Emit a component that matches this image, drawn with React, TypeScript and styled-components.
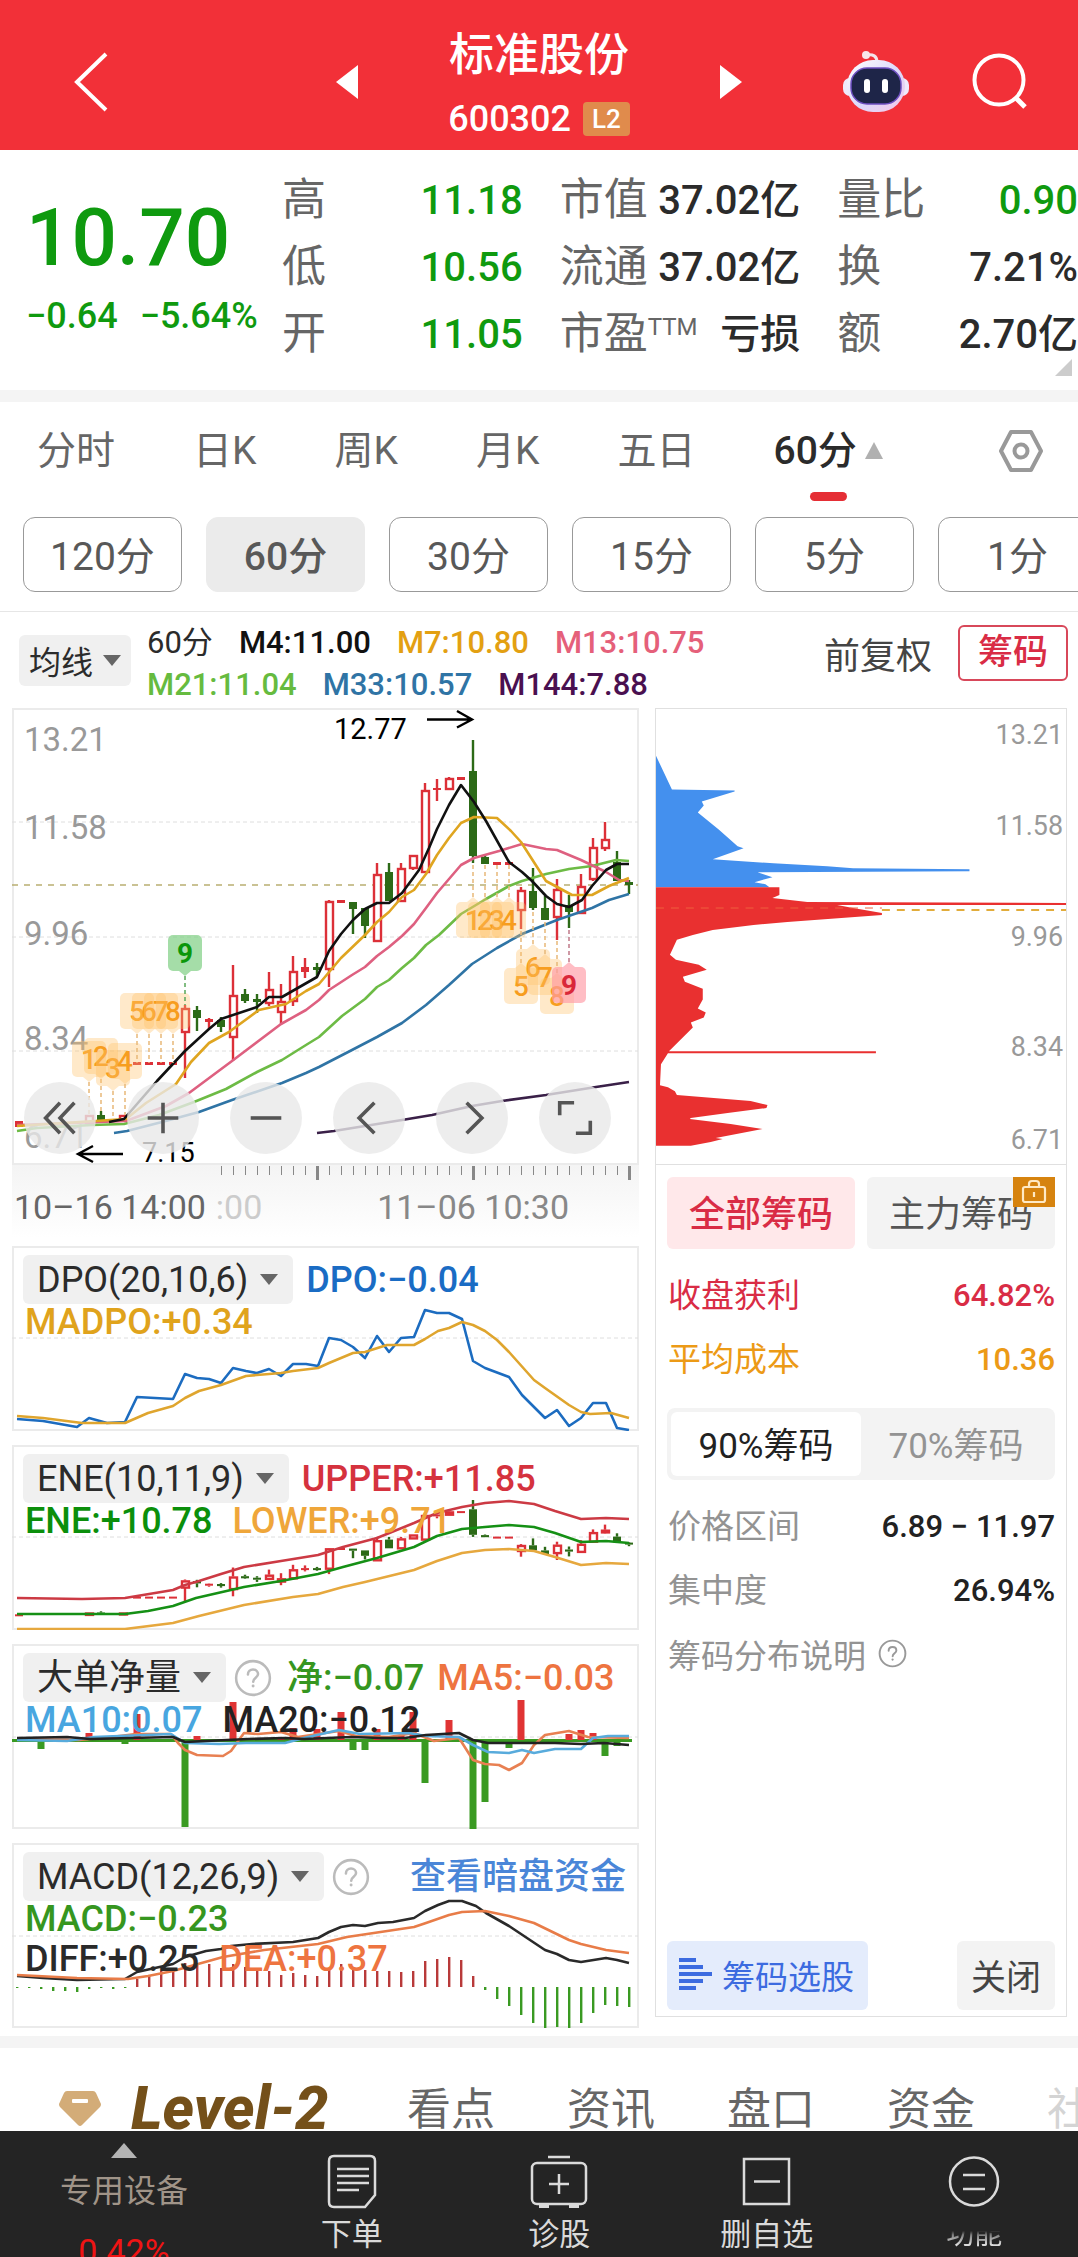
import React from "react";
import styled, { createGlobalStyle, css } from "styled-components";

const GlobalStyle = createGlobalStyle`
  * { box-sizing: border-box; }
  html, body { margin: 0; padding: 0; background: #fff; }
  body {
    font-family: Roboto, "Noto Sans CJK SC", sans-serif;
    color: #2b2b2b;
    overflow-x: hidden;
  }
  button {
    font: inherit;
    color: inherit;
    background: none;
    border: 0;
    padding: 0;
    margin: 0;
    cursor: pointer;
    white-space: nowrap;
  }
  a { text-decoration: none; }
  svg { display: block; flex: none; }
  h1, p, dl, dt, dd { margin: 0; font-weight: inherit; }
`;

const RED = "#dc3038";
const GREEN = "#0f9a0f";
const DARK_GREEN = "#2c6a17";

/* ---------- layout ---------- */

const Page = styled.div`
  width: 100%;
  overflow: hidden;
  background: #fff;
`;

const Header = styled.header`
  display: grid;
  grid-template-columns: 1fr auto 1fr;
  align-items: center;
  height: 150px;
  padding: 14px 50px 0;
  background: #f23038;
  color: #fff;
`;

const BackButton = styled.button`
  justify-self: start;
  padding-left: 22px;
`;

const HeaderCenter = styled.div`
  display: flex;
  align-items: center;
  gap: 90px;
`;

const HeaderActions = styled.div`
  display: flex;
  justify-content: flex-end;
  align-items: center;
  gap: 60px;
`;

const TitleBlock = styled.div`
  display: flex;
  flex-direction: column;
  align-items: center;
  gap: 3px;
  padding-top: 10px;
`;

const Title = styled.h1`
  font-size: 45px;
  line-height: 60px;
  font-weight: 500;
`;

const CodeLine = styled.div`
  display: flex;
  align-items: center;
  gap: 12px;
  font-size: 36px;
  line-height: 60px;
  font-weight: 500;
`;

const LevelBadge = styled.span`
  padding: 0 9px;
  border-radius: 4px;
  background: #e08b4c;
  font-size: 26px;
  line-height: 34px;
`;

const Quote = styled.section`
  display: grid;
  grid-template-columns: 245px 1fr 1fr 1fr;
  column-gap: 37px;
  height: 240px;
  padding-top: 17px;
  position: relative;
`;

const PriceBlock = styled.div`
  padding: 25px 0 0 26px;
  color: ${GREEN};
  white-space: nowrap;
`;

const Price = styled.div`
  font-size: 80px;
  line-height: 92px;
  font-weight: 500;
`;

const Change = styled.div`
  display: flex;
  gap: 22px;
  font-size: 36px;
  line-height: 64px;
  font-weight: 500;
`;

const QuoteColumn = styled.dl`
  min-width: 0;
`;

const QuoteRow = styled.div<{ $down?: boolean }>`
  display: flex;
  justify-content: space-between;
  font-size: 40px;
  line-height: 67px;
  white-space: nowrap;
  dt { font-size: 44px; color: #666; }
  dd { font-weight: 500; color: ${(p) => (p.$down ? GREEN : "#2b2b2b")}; }
  sup { font-size: 24px; line-height: 1; vertical-align: 14px; }
`;

const CornerMark = styled.span`
  position: absolute;
  right: 6px;
  bottom: 14px;
  border-left: 17px solid transparent;
  border-bottom: 17px solid #ccc;
`;

const Band = styled.div`
  height: 12px;
  background: #f4f4f4;
`;

const Tabs = styled.nav`
  display: flex;
  align-items: center;
  gap: 78px;
  height: 115px;
  padding: 0 34px 18px 37px;
`;

const Tab = styled.button<{ $active?: boolean }>`
  position: relative;
  display: flex;
  align-items: center;
  gap: 8px;
  font-size: 39px;
  line-height: 60px;
  color: ${(p) => (p.$active ? "#2b2b2b" : "#666")};
  font-weight: ${(p) => (p.$active ? 500 : 400)};
  ${(p) =>
    p.$active &&
    css`
      &::after {
        content: "";
        position: absolute;
        left: 37px;
        bottom: -20px;
        width: 37px;
        height: 9px;
        border-radius: 5px;
        background: #e52e35;
      }
    `}
`;

const SettingsButton = styled.button`
  margin-left: auto;
`;

const Chips = styled.div`
  display: flex;
  gap: 24px;
  padding: 0 0 19px 23px;
  overflow: hidden;
  border-bottom: 1px solid #e6e6e6;
`;

const Chip = styled.button<{ $active?: boolean }>`
  flex: 0 0 159px;
  height: 75px;
  padding-bottom: 3px;
  border: 1px solid ${(p) => (p.$active ? "#ebebeb" : "#999")};
  border-radius: 12px;
  background: ${(p) => (p.$active ? "#ebebeb" : "#fff")};
  color: #585858;
  font-size: 39px;
  font-weight: ${(p) => (p.$active ? 500 : 400)};
`;

const AverageBar = styled.div`
  display: flex;
  align-items: center;
  height: 96px;
  padding: 0 10px 0 19px;
`;

const Picker = styled.button<{ $big?: boolean }>`
  display: flex;
  align-items: center;
  gap: ${(p) => (p.$big ? 12 : 10)}px;
  height: ${(p) => (p.$big ? 49 : 51)}px;
  padding: ${(p) => (p.$big ? "0 15px 0 14px" : "0 10px")};
  border-radius: 6px;
  background: #f0f0f0;
  color: #2b2b2b;
  font-size: ${(p) => (p.$big ? 36 : 32)}px;
`;

const Caret = styled.span<{ $up?: boolean }>`
  border: 9px solid transparent;
  ${(p) =>
    p.$up
      ? css`border-top: 0; border-bottom: 17px solid #b0b0b0;`
      : css`border-bottom: 0; border-top: 11px solid #666;`}
`;

const Averages = styled.div`
  display: flex;
  flex-direction: column;
  flex: 1;
  padding: 8px 0 0 16px;
  white-space: nowrap;
`;

const AverageLine = styled.div`
  display: flex;
  gap: 26px;
  font-size: 31px;
  line-height: 42px;
`;

const Ink = styled.span<{ $color: string }>`
  color: ${(p) => p.$color};
  font-weight: 500;
`;

const AverageActions = styled.div`
  display: flex;
  align-items: center;
  gap: 26px;
  padding-bottom: 14px;
`;

const AdjustButton = styled.button`
  font-size: 36px;
  color: #444;
`;

const ChipsToggle = styled.button`
  width: 110px;
  height: 56px;
  border: 2px solid #d8485a;
  border-radius: 6px;
  color: #d92c45;
  font-size: 35px;
  line-height: 50px;
  font-weight: 500;
`;

const Board = styled.main`
  display: grid;
  grid-template-columns: 627fr 412fr;
  column-gap: 16px;
  padding: 0 11px 8px 12px;
`;

const Charts = styled.div`
  display: flex;
  flex-direction: column;
  min-width: 0;
`;

const Panel = styled.section`
  display: grid;
  position: relative;
  box-shadow: inset 0 0 0 2px #ebebeb;
  & + & { margin-top: 14px; }
  & > * { grid-area: 1 / 1; min-width: 0; }
`;

const Plot = styled.svg`
  width: 100%;
  height: auto;
  font-family: Roboto, sans-serif;
`;

const ChartTools = styled.div`
  position: absolute;
  left: 12px;
  bottom: 11px;
  display: flex;
  gap: 31px;
`;

const ToolButton = styled.button`
  display: grid;
  place-items: center;
  width: 72px;
  height: 72px;
  border-radius: 50%;
  background: rgba(232, 232, 232, 0.8);
`;

const TimeAxis = styled.div`
  height: 81px;
  background: linear-gradient(#f4f4f4, #fff 90%);
`;

const TimeLabels = styled.div`
  display: flex;
  padding: 2px 70px 0 2px;
  font-size: 34px;
  line-height: 40px;
  color: #888;
  white-space: nowrap;
  span:nth-child(1) { color: #666; margin-right: 10px; }
  span:nth-child(2) { color: #ccc; }
  span:nth-child(3) { margin-left: auto; }
`;

const Legend = styled.div`
  z-index: 1;
  padding: 11px 13px 0 11px;
  font-size: 36px;
  line-height: 40px;
  white-space: nowrap;
`;

const LegendTop = styled.div`
  display: flex;
  align-items: center;
  gap: 13px;
  height: 45px;
`;

const LegendRow = styled.div`
  display: flex;
  gap: 20px;
  padding-left: 2px;
`;

const FundLink = styled.a`
  margin-left: auto;
  color: #4a86d8;
  font-weight: 500;
`;

const HelpButton = styled.button`
  display: flex;
  margin: 0 2px 0 -5px;
`;

/* ---------- distribution side ---------- */

const Distribution = styled.aside`
  display: flex;
  flex-direction: column;
  margin-bottom: 11px;
  border: 1px solid #e0e0e0;
`;

const DistributionBody = styled.div`
  display: flex;
  flex-direction: column;
  flex: 1;
  padding: 12px 11px 6px;
  border-top: 1px solid #e0e0e0;
`;

const HolderTabs = styled.div`
  display: grid;
  grid-template-columns: 1fr 1fr;
  gap: 12px;
  margin-bottom: 15px;
`;

const HolderTab = styled.button<{ $active?: boolean }>`
  position: relative;
  height: 72px;
  padding-bottom: 3px;
  border-radius: 6px;
  font-size: 36px;
  background: ${(p) => (p.$active ? "#ffe8ea" : "#f3f3f3")};
  color: ${(p) => (p.$active ? "#d92c45" : "#555")};
  font-weight: ${(p) => (p.$active ? 500 : 400)};
`;

const LockBadge = styled.span`
  position: absolute;
  top: 0;
  right: 0;
  display: grid;
  place-items: center;
  width: 42px;
  height: 30px;
  background: #d6830f;
`;

const Fact = styled.div<{ $color?: string }>`
  display: flex;
  align-items: center;
  justify-content: space-between;
  height: 64px;
  padding: 0 0 0 1px;
  font-size: 33px;
  line-height: 64px;
  color: ${(p) => p.$color || "#939393"};
  dd { font-size: 31px; font-weight: 500; color: ${(p) => p.$color || "#222"}; }
`;

const Segments = styled.div`
  display: grid;
  grid-template-columns: 1fr 1fr;
  height: 72px;
  margin: 16px 0 15px;
  padding: 4px;
  border-radius: 8px;
  background: #f3f3f3;
`;

const Segment = styled.button<{ $active?: boolean }>`
  padding-bottom: 3px;
  border-radius: 6px;
  background: ${(p) => (p.$active ? "#fff" : "transparent")};
  color: ${(p) => (p.$active ? "#222" : "#939393")};
  font-size: 35px;
`;

const Explain = styled.button`
  display: flex;
  align-items: center;
  gap: 12px;
  height: 64px;
  padding: 0 0 2px 1px;
  font-size: 33px;
  color: #939393;
`;

const DistributionFooter = styled.div`
  display: flex;
  justify-content: space-between;
  margin-top: auto;
`;

const FooterButton = styled.button<{ $primary?: boolean }>`
  display: flex;
  align-items: center;
  gap: 10px;
  height: 69px;
  padding: 0 14px 2px ${(p) => (p.$primary ? 12 : 14)}px;
  border-radius: 6px;
  font-size: ${(p) => (p.$primary ? 33 : 35)}px;
  background: ${(p) => (p.$primary ? "#e4ecfc" : "#f3f3f3")};
  color: ${(p) => (p.$primary ? "#3c6be0" : "#444")};
`;

/* ---------- bottom ---------- */

const InfoTabs = styled.nav`
  display: flex;
  height: 83px;
  padding: 29px 0 0 59px;
  overflow: hidden;
`;

const InfoTab = styled.a<{ $faded?: boolean }>`
  flex: 0 0 160px;
  font-size: 44px;
  line-height: 66px;
  color: ${(p) => (p.$faded ? "#d4d4d4" : "#666")};
  white-space: nowrap;
`;

const LevelTab = styled.a`
  display: flex;
  gap: 30px;
  flex: 0 0 348px;
  font-size: 60px;
  line-height: 64px;
  font-weight: 800;
  font-style: italic;
  color: #74501a;
  svg { margin-top: 14px; }
`;

const BottomBar = styled.footer`
  display: flex;
  height: 126px;
  background: #242424;
  color: #dadada;
  overflow: hidden;
`;

const Device = styled.button`
  flex: 0 0 23%;
  display: flex;
  flex-direction: column;
  align-items: center;
  padding-top: 12px;
  font-size: 32px;
  line-height: 66px;
  color: #a09488;
`;

const DeviceGain = styled.span`
  font-size: 34px;
  line-height: 54px;
  color: #f01414;
`;

const UpMark = styled.span`
  border: 13px solid transparent;
  border-top: 0;
  border-bottom: 15px solid #b4b4b4;
`;

const BarItem = styled.button<{ $veiled?: boolean }>`
  flex: 1;
  display: flex;
  flex-direction: column;
  align-items: center;
  padding-top: 22px;
  font-size: 31px;
  line-height: 52px;
  span {
    ${(p) =>
      p.$veiled &&
      css`
        font-size: 28px;
        mask-image: linear-gradient(transparent 42%, rgba(0, 0, 0, 0.5) 50%, #000 68%);
      `}
  }
`;

/* ---------- chart data ---------- */

type Kind = "up" | "down" | "fill";
type Candle = [number, number, number, number, number, Kind];

const candles: Candle[] = [
  [20, 421, 421, 427, 427, "fill"],
  [90, 415, 415, 423, 423, "up"],
  [102, 411, 415, 422, 422, "down"],
  [124, 415, 415, 420, 420, "up"],
  [138, 362, 362, 365, 365, "fill"],
  [150, 362, 362, 365, 365, "fill"],
  [162, 362, 362, 365, 365, "fill"],
  [174, 362, 362, 365, 365, "fill"],
  [186, 305, 308, 332, 378, "up"],
  [198, 306, 310, 318, 331, "down"],
  [210, 318, 319, 322, 329, "fill"],
  [222, 317, 320, 327, 332, "down"],
  [234, 265, 295, 337, 361, "up"],
  [246, 289, 294, 301, 303, "down"],
  [258, 294, 299, 302, 313, "down"],
  [270, 272, 289, 303, 306, "up"],
  [282, 284, 301, 312, 324, "up"],
  [294, 256, 271, 301, 306, "up"],
  [306, 258, 267, 272, 278, "fill"],
  [318, 263, 267, 270, 276, "down"],
  [330, 200, 201, 269, 287, "up"],
  [342, 200, 200, 203, 203, "fill"],
  [354, 202, 202, 209, 234, "down"],
  [366, 208, 208, 226, 238, "down"],
  [378, 163, 174, 241, 241, "up"],
  [390, 163, 172, 201, 201, "down"],
  [402, 163, 168, 201, 201, "up"],
  [414, 155, 155, 168, 170, "up"],
  [426, 83, 90, 172, 172, "up"],
  [438, 79, 88, 90, 101, "fill"],
  [450, 77, 78, 89, 90, "up"],
  [462, 77, 77, 80, 80, "fill"],
  [474, 40, 71, 156, 163, "down"],
  [486, 155, 157, 164, 164, "down"],
  [498, 162, 162, 165, 165, "fill"],
  [510, 162, 162, 165, 165, "fill"],
  [522, 187, 190, 210, 229, "up"],
  [534, 168, 191, 208, 210, "down"],
  [546, 196, 208, 220, 220, "down"],
  [558, 179, 189, 217, 240, "up"],
  [570, 195, 205, 212, 228, "down"],
  [582, 174, 186, 213, 213, "up"],
  [594, 138, 147, 179, 181, "up"],
  [606, 122, 139, 148, 151, "up"],
  [618, 151, 162, 181, 181, "down"],
  [630, 180, 182, 185, 194, "down"],
];

const averageLines = [
  { color: "#3a2048", points: "318,433 335,431 403,420 433,415 473,406 503,401 547,395 597,387 630,382" },
  { color: "#2f74a5", points: "115,433 128,431 163,422 200,412 233,400 283,383 307,373 320,367 353,350 378,337 403,323 427,305 450,285 473,264 498,248 523,234 558,220 593,208 610,200 630,194" },
  { color: "#6dbb45", points: "18,431 38,428 93,425 125,424 160,415 195,402 227,389 258,372 283,360 307,345 320,337 343,316 366,299 378,287 390,280 403,268 415,258 427,245 440,235 462,214 487,199 510,186 523,181 547,174 570,169 593,166 617,160 630,161" },
  { color: "#de6080", points: "18,425 127,421 167,406 190,393 233,361 282,324 307,310 320,300 330,290 353,275 366,267 378,256 390,247 403,236 415,224 427,208 438,193 450,179 462,165 475,158 500,151 523,144 547,149 558,150 582,160 607,172 620,180 630,181" },
  { color: "#dfa520", points: "18,426 127,419 147,403 177,384 192,362 210,343 230,332 260,310 287,304 307,291 320,284 342,258 366,235 378,222 390,212 403,197 415,190 427,174 438,155 450,138 462,123 475,117 498,118 512,131 522,142 547,181 560,188 573,195 593,195 610,186 630,178" },
  { color: "#111", points: "110,422 125,419 158,381 186,351 210,329 222,319 258,307 270,297 283,297 318,277 330,251 342,234 354,220 366,209 378,203 390,203 403,193 420,170 430,148 438,129 450,105 462,85 475,102 487,121 510,162 523,172 533,181 547,196 558,204 570,207 583,200 593,186 607,170 618,164 630,164" },
];

interface Mark { n: number; x: number; y: number; to: number; tone: "orange" | "green" | "pink"; }

const marks: Mark[] = [
  { n: 1, x: 90, y: 359, to: 415, tone: "orange" },
  { n: 2, x: 102, y: 356, to: 411, tone: "orange" },
  { n: 3, x: 114, y: 368, to: 418, tone: "orange" },
  { n: 4, x: 126, y: 361, to: 415, tone: "orange" },
  { n: 5, x: 138, y: 311, to: 363, tone: "orange" },
  { n: 6, x: 150, y: 311, to: 363, tone: "orange" },
  { n: 7, x: 162, y: 311, to: 363, tone: "orange" },
  { n: 8, x: 174, y: 311, to: 363, tone: "orange" },
  { n: 9, x: 186, y: 253, to: 305, tone: "green" },
  { n: 1, x: 474, y: 220, to: 163, tone: "orange" },
  { n: 2, x: 486, y: 220, to: 164, tone: "orange" },
  { n: 3, x: 498, y: 220, to: 165, tone: "orange" },
  { n: 4, x: 510, y: 220, to: 165, tone: "orange" },
  { n: 5, x: 522, y: 286, to: 229, tone: "orange" },
  { n: 6, x: 534, y: 267, to: 210, tone: "orange" },
  { n: 7, x: 546, y: 277, to: 220, tone: "orange" },
  { n: 8, x: 558, y: 296, to: 240, tone: "orange" },
  { n: 9, x: 570, y: 285, to: 228, tone: "pink" },
];

const markTones = {
  orange: { box: "#ffc36b", text: "#f79d1e", opacity: 0.36, dash: "#e8b878" },
  green: { box: "#7fd084", text: "#0a970a", opacity: 0.7, dash: "#5aa85a" },
  pink: { box: "#ff9aa6", text: "#d9283a", opacity: 0.65, dash: "#c07888" },
};

const dpoLine = "18,173 44,175 78,181 90,172 108,177 126,176 138,151 174,153 186,128 198,132 210,133 222,137 234,122 247,125 258,127 270,123 282,130 294,118 307,118 319,120 330,92 342,94 354,101 366,112 378,90 390,106 402,92 415,91 426,64 438,67 450,67 463,73 474,115 486,122 510,131 523,149 546,172 558,164 570,180 582,172 594,157 607,157 618,182 630,184";
const madpoLine = "18,170 44,172 83,177 126,177 149,167 174,160 186,152 200,145 222,139 247,130 282,127 294,125 319,122 330,117 354,107 366,106 388,99 415,99 426,93 439,85 450,82 463,76 474,79 486,85 498,94 510,106 535,134 546,142 570,159 582,166 591,168 612,167 630,172";

const upperLine = "18,153 83,154 126,153 174,145 186,140 200,136 222,129 245,122 282,116 319,110 344,102 378,93 415,78 438,68 463,62 486,58 510,56 535,59 556,66 582,74 607,73 630,74";
const eneLine = "18,169 126,169 149,166 174,161 197,153 245,142 282,136 319,129 344,122 378,113 415,102 438,91 463,84 486,82 510,80 535,82 556,88 582,97 607,96 630,98";
const lowerLine = "18,184 126,184 174,178 200,171 245,160 294,152 319,149 344,142 366,137 415,125 438,116 463,108 486,105 510,104 535,106 556,112 582,120 607,118 630,119";

const orderBars: [number, number][] = [
  [42, 105], [90, 89], [126, 100], [138, 70], [186, 183], [198, 92], [234, 58], [282, 93],
  [294, 84], [318, 85], [342, 68], [354, 106], [366, 106], [378, 85], [402, 91], [414, 68],
  [426, 139], [450, 76], [474, 185], [486, 158], [510, 104], [522, 56], [570, 90], [582, 86],
  [594, 89], [606, 112], [618, 102],
];
const orderMa5 = "18,95 80,96 112,93 137,90 172,90 179,99 186,106 198,111 224,112 232,107 245,89 259,90 282,88 299,93 319,90 340,87 357,92 390,93 415,89 435,97 460,94 474,116 486,120 500,121 510,126 523,119 535,101 546,91 570,87 589,93 630,94";
const orderMa10 = "18,96 68,97 95,93 172,90 186,99 220,100 247,99 286,99 305,94 340,86 361,90 410,89 427,92 460,93 474,101 489,108 510,109 523,106 535,109 556,105 582,105 594,94 609,92 630,92";
const orderMa20 = "18,94 68,93 91,95 174,93 186,98 249,95 286,94 305,95 352,93 381,94 406,94 427,91 460,89 474,96 489,99 535,99 556,99 582,100 605,99 630,101";

const macdBars = [
  -1, -1, -2, -4, -4, -5, -2, -1, -2, -1, 8, 12, 16, 19, 24, 24, 23, 19, 23, 20, 18, 16, 12, 14, 12, 11,
  17, 23, 20, 17, 16, 16, 15, 16, 26, 28, 30, 27, 11, -3, -12, -19, -28, -36, -42, -40, -41, -36, -26,
  -18, -19, -20,
];
const diffLine = "18,133 44,135 78,137 126,136 138,129 174,121 186,114 207,108 222,106 232,103 253,101 294,99 319,95 330,89 342,84 354,82 366,83 379,80 394,79 415,75 426,68 439,62 450,58 463,58 477,63 487,70 510,83 546,107 558,111 570,117 582,119 607,115 618,117 630,120";
const deaLine = "18,132 78,135 129,136 149,133 174,128 199,121 224,114 265,107 319,101 348,94 415,84 427,80 450,72 463,69 486,68 510,73 535,80 570,97 582,101 607,107 630,110";

const lossShape = "655,755 671,789 734,790 734,791 701,801 703,805 697,812 718,829 737,846 743,848 712,859 773,863 827,866 853,868 970,869 970,871 757,872 763,874 772,877 754,882 765,884 769,887 655,887";
const profitShape = "655,887 779,887 779,895 772,898 807,902 1067,903 1067,905 837,905 853,908 882,913 882,915 787,922 753,925 712,930 692,935 676,940 669,955 675,960 698,965 706,970 682,977 684,982 702,989 702,1000 697,1009 705,1013 703,1018 690,1023 692,1028 668,1052 876,1052 876,1054 667,1054 660,1065 659,1086 667,1088 674,1092 676,1096 750,1102 767,1106 766,1109 727,1114 690,1119 689,1120 730,1125 762,1130 715,1139 722,1140 710,1143 690,1147 655,1147";

/* ---------- chart pieces ---------- */

const Line = ({ points, color, width = 2.6 }: { points: string; color: string; width?: number }) => (
  <polyline points={points} fill="none" stroke={color} strokeWidth={width} strokeLinejoin="round" />
);

const GridLine = ({ y }: { y: number }) => (
  <line x1="13" x2="639" y1={y} y2={y} stroke="#dedede" strokeDasharray="4 3" />
);

const Candles = ({ map = (v: number) => v, minBody = 1 }: { map?: (v: number) => number; minBody?: number }) => (
  <g>
    {candles.map(([x, high, top, bottom, low, kind]) => {
      const color = kind === "down" ? DARK_GREEN : RED;
      const t = map(top);
      const b = Math.max(map(bottom), t + minBody);
      return (
        <g key={x} stroke={color} strokeWidth="2.4">
          {high < top && <line x1={x} x2={x} y1={map(high)} y2={t} />}
          {low > bottom && <line x1={x} x2={x} y1={b} y2={map(low)} />}
          {kind === "up" ? (
            <rect x={x - 3} y={t + 1} width="7" height={Math.max(b - t - 1, 1)} fill="#fff" />
          ) : (
            <rect x={x - 4} y={t} width="8" height={b - t} fill={color} strokeWidth="0" />
          )}
        </g>
      );
    })}
  </g>
);

const MarkTag = ({ n, x, y, to, tone }: Mark) => {
  const t = markTones[tone];
  const down = to > y;
  const edge = down ? y + 18 : y - 18;
  const tip = down ? edge + 5 : edge - 5;
  return (
    <g>
      <line x1={x} x2={x} y1={tip} y2={to} stroke={t.dash} strokeWidth="1.5" strokeDasharray="4 3" />
      <g fill={t.box} opacity={t.opacity}>
        <rect x={x - 17} y={y - 18} width="34" height="36" rx="5" />
        <polygon points={`${x - 6},${edge} ${x + 6},${edge} ${x},${tip}`} />
      </g>
      <text x={x} y={y + 10} fill={t.text} fontSize="28" fontWeight={tone === "orange" ? 500 : 700} textAnchor="middle">
        {n}
      </text>
    </g>
  );
};

const HelpIcon = ({ size, color }: { size: number; color: string }) => (
  <svg width={size} height={size} viewBox="0 0 36 36" fill="none" stroke={color} strokeWidth="2.4">
    <circle cx="18" cy="18" r="16" />
    <path d="M13.2 14.6c0-2.8 2-4.6 4.8-4.6s4.8 1.8 4.8 4.3c0 3.4-4.6 3.6-4.6 7.2" strokeLinecap="round" />
    <circle cx="18.1" cy="25.6" r=".7" fill={color} strokeWidth="1.4" />
  </svg>
);

const tools: { label: string; d: string }[] = [
  { label: "最早", d: "M20 3 4 20l16 17M36 3 20 20l16 17" },
  { label: "放大", d: "M3 20h34M20 3v34" },
  { label: "缩小", d: "M3 20h34" },
  { label: "左移", d: "M26 3 9 20l17 17" },
  { label: "右移", d: "M14 3l17 17-17 17" },
  { label: "全屏", d: "M3 17V3h16M37 23v14H21" },
];

const priceLabels: [string, number, number][] = [
  ["13.21", 51, 743], ["11.58", 139, 835], ["9.96", 245, 946], ["8.34", 350, 1057], ["6.71", 448, 1150],
];

const MainChart = () => (
  <Panel>
    <Plot viewBox="13 8 627 457" role="img" aria-label="60分K线">
      <GridLine y={122} />
      <GridLine y={237} />
      <GridLine y={351} />
      <g fill="#999" fontSize="33">
        {priceLabels.map(([text, y]) => (
          <text key={text} x="25" y={y}>{text}</text>
        ))}
      </g>
      <line x1="13" x2="639" y1="185" y2="185" stroke="#b9ae72" strokeWidth="1.6" strokeDasharray="6 6" />
      <Candles />
      {averageLines.map((l) => (
        <Line key={l.color} {...l} />
      ))}
      {marks.map((m) => (
        <MarkTag key={m.x} {...m} />
      ))}
      <g fill="#000" fontSize="29">
        <text x="335" y="39">12.77</text>
        <text x="143" y="462" fontSize="27">7.15</text>
      </g>
      <path d="M428 19.500h45M458 11l15 8.500-15 8M124 454H79M94 446l-15 8 15 8" fill="none" stroke="#000" strokeWidth="2.4" />
    </Plot>
    <ChartTools>
      {tools.map((t) => (
        <ToolButton key={t.label} aria-label={t.label}>
          <svg width="36" height="36" viewBox="0 0 40 40" fill="none" stroke="#555" strokeWidth="4">
            <path d={t.d} />
          </svg>
        </ToolButton>
      ))}
    </ChartTools>
  </Panel>
);

const ticks = Array.from({ length: 35 }, (_, i) => 222 + i * 12);

const OrderChart = () => (
  <Plot viewBox="13 0 627 185" role="img" aria-label="大单净量">
    <GridLine y={93} />
    <rect x="13" y="95" width="620" height="3" fill="#3a9a22" />
    {orderBars.map(([x, y]) => (
      <rect key={x} x={x - 3.5} y={Math.min(y, 96)} width="7" height={Math.abs(y - 96)} fill={y < 96 ? "#e03434" : "#3a9a22"} />
    ))}
    <Line points={orderMa5} color="#e88052" />
    <Line points={orderMa10} color="#58abdc" />
    <Line points={orderMa20} color="#222" />
  </Plot>
);

const MacdChart = () => (
  <Plot viewBox="13 0 627 185" role="img" aria-label="MACD">
    <GridLine y={93} />
    {macdBars.map((v, i) => (
      <rect key={i} x={17 + i * 12} y={v > 0 ? 144 - v : 144} width="2.400" height={Math.abs(v)} fill={v > 0 ? "#b83a3a" : "#3a9a22"} />
    ))}
    <Line points={diffLine} color="#2a2a2a" />
    <Line points={deaLine} color="#e87c48" />
  </Plot>
);

const RobotIcon = () => (
  <svg width="68" height="64" viewBox="0 0 68 64">
    <defs>
      <linearGradient id="shell" x1="0" y1="0" x2="1" y2="1">
        <stop offset="0" stopColor="#fff" />
        <stop offset=".55" stopColor="#dcd8fa" />
        <stop offset="1" stopColor="#f6c8e8" />
      </linearGradient>
    </defs>
    <path d="M25 5c6-1 10 1 10 7" fill="none" stroke="#f4e4ea" strokeWidth="3" />
    <circle cx="24" cy="5" r="4" fill="#f8e6ea" />
    <rect x="1" y="28" width="66" height="18" rx="7" fill="#efe9fb" />
    <rect x="5" y="10" width="58" height="52" rx="26" fill="url(#shell)" />
    <rect x="9" y="18" width="50" height="36" rx="16" fill="#1e2548" stroke="#6d4fc0" strokeWidth="1.500" />
    <rect x="22" y="29" width="6" height="14" rx="3" fill="#fff" />
    <rect x="40" y="29" width="6" height="14" rx="3" fill="#fff" />
  </svg>
);

/* ---------- page content ---------- */

const quoteColumns = [
  [
    { label: "高", value: "11.18", down: true },
    { label: "低", value: "10.56", down: true },
    { label: "开", value: "11.05", down: true },
  ],
  [
    { label: "市值", value: "37.02亿" },
    { label: "流通", value: "37.02亿" },
    { label: "市盈", note: "TTM", value: "亏损" },
  ],
  [
    { label: "量比", value: "0.90", down: true },
    { label: "换", value: "7.21%" },
    { label: "额", value: "2.70亿" },
  ],
] as { label: string; note?: string; value: string; down?: boolean }[][];

export default function App() {
  return (
    <Page>
      <GlobalStyle />
      <Header>
        <BackButton aria-label="返回">
          <svg width="38" height="60" viewBox="0 0 38 60" fill="none" stroke="#fff" strokeWidth="4">
            <path d="M34 2 5 30l29 28" />
          </svg>
        </BackButton>
        <HeaderCenter>
          <button aria-label="上一只">
            <svg width="22" height="34" viewBox="0 0 22 34"><path d="M22 0v34L0 17z" fill="#fff" /></svg>
          </button>
          <TitleBlock>
            <Title>标准股份</Title>
            <CodeLine>
              600302<LevelBadge>L2</LevelBadge>
            </CodeLine>
          </TitleBlock>
          <button aria-label="下一只">
            <svg width="22" height="34" viewBox="0 0 22 34"><path d="M0 0v34l22-17z" fill="#fff" /></svg>
          </button>
        </HeaderCenter>
        <HeaderActions>
          <button aria-label="智能助手"><RobotIcon /></button>
          <button aria-label="搜索">
            <svg width="58" height="58" viewBox="0 0 58 58" fill="none" stroke="#fff" strokeWidth="4">
              <circle cx="29" cy="27" r="24.500" />
              <path d="M45 44l10 10" strokeWidth="5" />
            </svg>
          </button>
        </HeaderActions>
      </Header>

      <Quote>
        <PriceBlock>
          <Price>10.70</Price>
          <Change>
            <span>−0.64</span>
            <span>−5.64%</span>
          </Change>
        </PriceBlock>
        {quoteColumns.map((rows, i) => (
          <QuoteColumn key={i}>
            {rows.map((r) => (
              <QuoteRow key={r.label} $down={r.down}>
                <dt>
                  {r.label}
                  {r.note && <sup>{r.note}</sup>}
                </dt>
                <dd>{r.value}</dd>
              </QuoteRow>
            ))}
          </QuoteColumn>
        ))}
        <CornerMark />
      </Quote>
      <Band />

      <Tabs>
        {["分时", "日K", "周K", "月K", "五日"].map((t) => (
          <Tab key={t}>{t}</Tab>
        ))}
        <Tab $active>
          60分
          <Caret $up />
        </Tab>
        <SettingsButton aria-label="设置">
          <svg width="46" height="44" viewBox="0 0 46 44" fill="none" stroke="#999" strokeWidth="4">
            <path d="M13 3h20l10 19-10 19H13L3 22z" strokeLinejoin="round" />
            <circle cx="23" cy="22" r="6.500" />
          </svg>
        </SettingsButton>
      </Tabs>
      <Chips>
        {["120分", "60分", "30分", "15分", "5分", "1分"].map((t) => (
          <Chip key={t} $active={t === "60分"}>{t}</Chip>
        ))}
      </Chips>

      <AverageBar>
        <Picker>均线<Caret /></Picker>
        <Averages>
          <AverageLine>
            <span>60分</span>
            <Ink $color="#111">M4:11.00</Ink>
            <Ink $color="#e3a012">M7:10.80</Ink>
            <Ink $color="#e5607a">M13:10.75</Ink>
          </AverageLine>
          <AverageLine>
            <Ink $color="#66bb3f">M21:11.04</Ink>
            <Ink $color="#2f74a5">M33:10.57</Ink>
            <Ink $color="#4a1050">M144:7.88</Ink>
          </AverageLine>
        </Averages>
        <AverageActions>
          <AdjustButton>前复权</AdjustButton>
          <ChipsToggle>筹码</ChipsToggle>
        </AverageActions>
      </AverageBar>

      <Board>
        <Charts>
          <MainChart />
          <TimeAxis>
            <Plot viewBox="13 0 627 20" aria-hidden="true">
              {ticks.map((x) => {
                const major = (x - 318) % 156 === 0;
                return <rect key={x} x={major ? x - 1 : x} y="1" width={major ? 3 : 1} height={major ? 14 : 9} fill="#888" />;
              })}
            </Plot>
            <TimeLabels>
              <span>10–16 14:00</span>
              <span>:00</span>
              <span>11–06 10:30</span>
            </TimeLabels>
          </TimeAxis>

          <Panel>
            <Plot viewBox="13 0 627 185" role="img" aria-label="DPO">
              <GridLine y={92} />
              <Line points={dpoLine} color="#1c6cc0" />
              <Line points={madpoLine} color="#dfa52e" />
            </Plot>
            <Legend>
              <LegendTop>
                <Picker $big>DPO(20,10,6)<Caret /></Picker>
                <Ink $color="#1a6cc4">DPO:−0.04</Ink>
              </LegendTop>
              <LegendRow>
                <Ink $color="#e0a31c">MADPO:+0.34</Ink>
              </LegendRow>
            </Legend>
          </Panel>

          <Panel>
            <Plot viewBox="13 0 627 185" role="img" aria-label="ENE">
              <GridLine y={92} />
              <Candles map={(v) => 43 + v * 0.3} minBody={2} />
              <Line points={upperLine} color="#cc3a44" />
              <Line points={eneLine} color="#159015" />
              <Line points={lowerLine} color="#e6a83e" />
            </Plot>
            <Legend>
              <LegendTop>
                <Picker $big>ENE(10,11,9)<Caret /></Picker>
                <Ink $color="#d5323e">UPPER:+11.85</Ink>
              </LegendTop>
              <LegendRow>
                <Ink $color="#0b8f0b">ENE:+10.78</Ink>
                <Ink $color="#efa63a">LOWER:+9.71</Ink>
              </LegendRow>
            </Legend>
          </Panel>

          <Panel>
            <OrderChart />
            <Legend>
              <LegendTop>
                <Picker $big>大单净量<Caret /></Picker>
                <HelpButton aria-label="大单净量说明"><HelpIcon size={38} color="#bbb" /></HelpButton>
                <Ink $color="#36961f">净:−0.07</Ink>
                <Ink $color="#ee7440">MA5:−0.03</Ink>
              </LegendTop>
              <LegendRow>
                <Ink $color="#48a6e0">MA10:0.07</Ink>
                <Ink $color="#222">MA20:−0.12</Ink>
              </LegendRow>
            </Legend>
          </Panel>

          <Panel>
            <MacdChart />
            <Legend>
              <LegendTop>
                <Picker $big>MACD(12,26,9)<Caret /></Picker>
                <HelpButton aria-label="MACD说明"><HelpIcon size={38} color="#bbb" /></HelpButton>
                <FundLink href="#fund">查看暗盘资金</FundLink>
              </LegendTop>
              <LegendRow>
                <Ink $color="#36961f">MACD:−0.23</Ink>
              </LegendRow>
              <LegendRow>
                <Ink $color="#2a2a2a">DIFF:+0.25</Ink>
                <Ink $color="#ee7440">DEA:+0.37</Ink>
              </LegendRow>
            </Legend>
          </Panel>
        </Charts>

        <Distribution>
          <Plot viewBox="655 708 412 457" role="img" aria-label="筹码分布">
            <polygon points={lossShape} fill="#4490ee" />
            <polygon points={profitShape} fill="#e93030" />
            <line x1="655" x2="882" y1="908" y2="908" stroke="#f0603c" strokeDasharray="8 7" />
            <line x1="882" x2="1067" y1="910" y2="910" stroke="#e2ac3a" strokeWidth="2" strokeDasharray="8 7" />
            <g fill="#999" fontSize="27" textAnchor="end">
              {priceLabels.map(([text, , y]) => (
                <text key={text} x="1064" y={y}>{text}</text>
              ))}
            </g>
          </Plot>
          <DistributionBody>
            <HolderTabs>
              <HolderTab $active>全部筹码</HolderTab>
              <HolderTab>
                主力筹码
                <LockBadge>
                  <svg width="26" height="26" viewBox="0 0 26 26" fill="none" stroke="#ffe9c4" strokeWidth="2.200">
                    <rect x="2" y="8" width="22" height="15" rx="2" />
                    <path d="M8 8V5c0-2 1-3 3-3h4c2 0 3 1 3 3v3M13 13v5" />
                  </svg>
                </LockBadge>
              </HolderTab>
            </HolderTabs>
            <dl>
              <Fact $color="#d92c45"><dt>收盘获利</dt><dd>64.82%</dd></Fact>
              <Fact $color="#ec9a16"><dt>平均成本</dt><dd>10.36</dd></Fact>
            </dl>
            <Segments>
              <Segment $active>90%筹码</Segment>
              <Segment>70%筹码</Segment>
            </Segments>
            <dl>
              <Fact><dt>价格区间</dt><dd>6.89 − 11.97</dd></Fact>
              <Fact><dt>集中度</dt><dd>26.94%</dd></Fact>
            </dl>
            <Explain>
              筹码分布说明
              <HelpIcon size={29} color="#999" />
            </Explain>
            <DistributionFooter>
              <FooterButton $primary>
                <svg width="33" height="33" viewBox="0 0 33 33" fill="#3c6be0">
                  <path d="M0 0h17v4H0zM0 7h24v4H0zM0 14h33v4H0zM0 21h24v4H0zM0 28h17v4H0z" />
                </svg>
                筹码选股
              </FooterButton>
              <FooterButton>关闭</FooterButton>
            </DistributionFooter>
          </DistributionBody>
        </Distribution>
      </Board>
      <Band />

      <InfoTabs>
        <LevelTab href="#level2">
          <svg width="42" height="36" viewBox="0 0 42 36">
            <path d="M8 0h26q2 0 3 2l5 11q0 2-1 3L23 34q-2 2-4 0L1 16q-1-1-1-3L5 2q1-2 3-2z" fill="#d3ac78" />
            <rect x="13" y="8" width="16" height="4" rx="1" fill="#fff" />
          </svg>
          Level-2
        </LevelTab>
        <InfoTab href="#view">看点</InfoTab>
        <InfoTab href="#news">资讯</InfoTab>
        <InfoTab href="#book">盘口</InfoTab>
        <InfoTab href="#money">资金</InfoTab>
        <InfoTab href="#club" $faded>社</InfoTab>
      </InfoTabs>

      <BottomBar>
        <Device>
          <UpMark />
          <span>专用设备</span>
          <DeviceGain>0.42%</DeviceGain>
        </Device>
        <BarItem>
          <svg width="60" height="56" viewBox="0 0 60 56" fill="none" stroke="#dadada" strokeWidth="2.500">
            <path d="M12 3h36q5 0 5 5v34L43 54H12q-5 0-5-5V8q0-5 5-5z" />
            <path d="M15 16h32M15 23h32M15 30h32M15 37h22" />
          </svg>
          <span>下单</span>
        </BarItem>
        <BarItem>
          <svg width="60" height="56" viewBox="0 0 60 56" fill="none" stroke="#dadada" strokeWidth="2.500">
            <rect x="3" y="10" width="54" height="41" rx="5" />
            <path d="M19 4h22M30 21v20M20 31h20" />
            <path d="M10 53h10M40 53h10" strokeWidth="4" />
          </svg>
          <span>诊股</span>
        </BarItem>
        <BarItem>
          <svg width="60" height="56" viewBox="0 0 60 56" fill="none" stroke="#dadada" strokeWidth="2.500">
            <rect x="7" y="6" width="45" height="45" />
            <path d="M17 28.500h26" />
          </svg>
          <span>删自选</span>
        </BarItem>
        <BarItem $veiled>
          <svg width="60" height="56" viewBox="0 0 60 56" fill="none" stroke="#dadada" strokeWidth="2.500">
            <circle cx="30" cy="28.500" r="24" />
            <path d="M19 22h22M19 36h22" />
          </svg>
          <span>功能</span>
        </BarItem>
      </BottomBar>
    </Page>
  );
}
